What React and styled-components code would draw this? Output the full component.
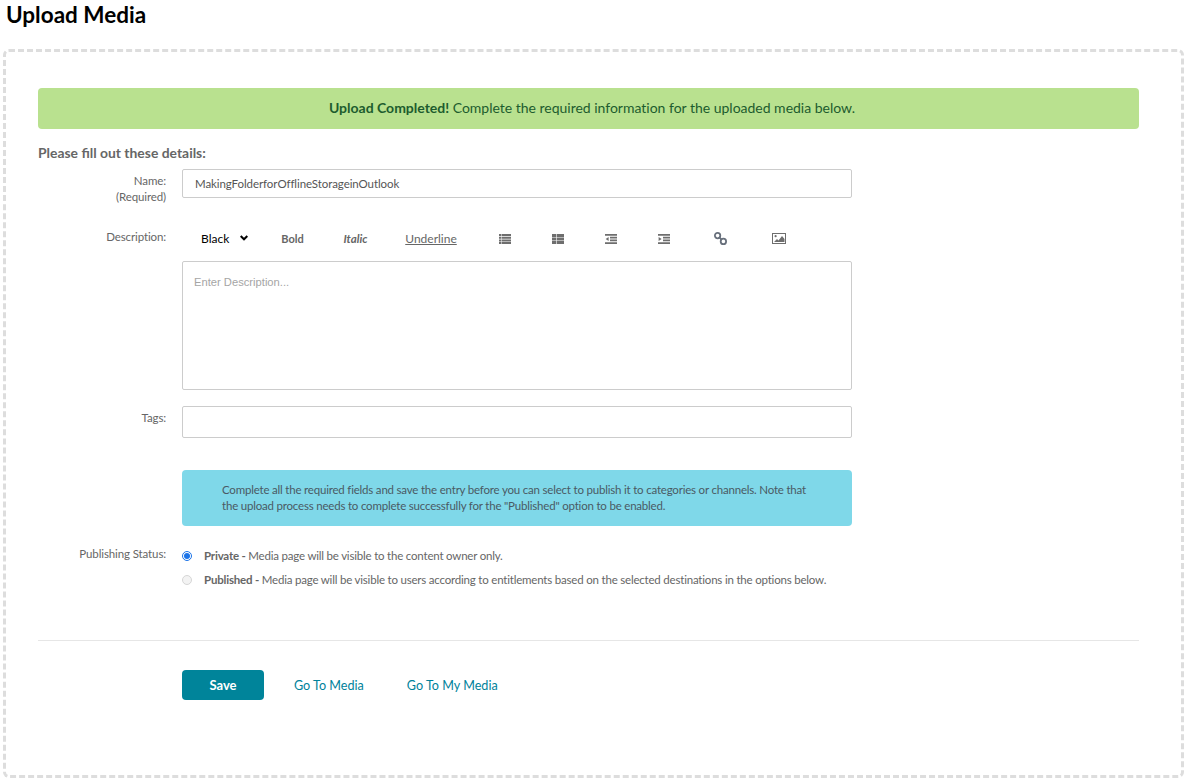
import React from "react";
import styled, { createGlobalStyle } from "styled-components";

const Global = createGlobalStyle`
  html, body { margin: 0; padding: 0; background: #fff; }
  body { font-family: Lato, "Open Sans", sans-serif; font-size: 12px; color: #666; }
  * { box-sizing: border-box; }
`;

const Page = styled.div`
  width: 1189px;
  height: 783px;
  overflow: hidden;
  padding: 0 5px 0 3px;
`;

const Title = styled.h1`
  margin: 0 0 20px 3px;
  height: 29px;
  font-size: 22.5px;
  line-height: 30px;
  font-weight: 700;
  color: #000;
`;

const Panel = styled.div`
  height: 729px;
  border: 3px dashed #ddd;
  border-radius: 6px;
  padding: 36px 42px 0 32px;
`;

const Alert = styled.div`
  height: 41px;
  border-radius: 4px;
  background: #b9e18f;
  color: #1d5c2e;
  font-size: 14px;
  line-height: 40px;
  text-align: center;
  padding-left: 7px;
  letter-spacing: -0.01px;
  b { font-weight: 700; }
`;

const Heading = styled.div`
  margin-top: 15px;
  height: 17px;
  font-size: 13.9px;
  line-height: 17px;
  font-weight: 700;
  color: #666;
`;

const Row = styled.div`
  display: grid;
  grid-template-columns: 128px 670px;
  column-gap: 16px;
  margin-top: ${(p) => p.$top || 0}px;
`;

const Label = styled.div`
  text-align: right;
  font-size: 11.5px;
  letter-spacing: -0.12px;
  line-height: 16px;
  padding-top: ${(p) => p.$pad || 0}px;
  color: #666;
`;

const TextBox = styled.div`
  height: ${(p) => p.$h}px;
  border: 1px solid #ccc;
  border-radius: 2px;
  padding: 0 12px;
  font-size: 11.5px;
  letter-spacing: -0.08px;
  line-height: ${(p) => p.$h - 2}px;
  color: #555;
`;

const Toolbar = styled.div`
  height: 23px;
  display: flex;
  align-items: center;
  font-size: 12px;
`;

const ColorSelect = styled.div`
  width: 84px;
  padding-left: 19px;
  display: flex;
  align-items: center;
  gap: 11px;
  color: #000;
  svg { display: block; margin-top: -2px; }
`;

const Tool = styled.span`
  width: ${(p) => p.$w}px;
  text-align: center;
  font-size: ${(p) => p.$size || 12}px;
  font-weight: ${(p) => (p.$b ? 700 : 400)};
  font-style: ${(p) => (p.$i ? "italic" : "normal")};
  text-decoration: ${(p) => (p.$u ? "underline" : "none")};
  color: #666;
`;

const IconSlot = styled.span`
  width: ${(p) => p.$w}px;
  display: flex;
  justify-content: center;
  color: #6e6e6e;
  svg { display: block; }
`;

const DescBox = styled.div`
  height: 129px;
  margin-top: 11px;
  border: 1px solid #ccc;
  border-radius: 2px;
  padding: 12px 11px;
  font-family: "Liberation Sans", Arial, sans-serif;
  font-size: 11.2px;
  line-height: 16px;
  color: #a5a5a5;
`;

const Note = styled.div`
  height: 56px;
  background: #7fd8e9;
  border-radius: 4px;
  padding: 12px 40px;
  font-size: 11.5px;
  letter-spacing: -0.2px;
  line-height: 16px;
  color: #4a5a64;
`;

const RadioList = styled.div`
  display: flex;
  flex-direction: column;
  gap: 8px;
  padding-top: 2px;
`;

const RadioRow = styled.div`
  display: flex;
  align-items: center;
  height: 16px;
  font-size: 11.5px;
  letter-spacing: -0.2px;
  line-height: 16px;
  color: #666;
  white-space: nowrap;
  b { font-weight: 700; }
`;

const Radio = styled.span`
  width: 10px;
  height: 10px;
  border-radius: 50%;
  margin-right: 12px;
  flex: none;
  background: ${(p) => (p.$on ? "#fff" : "#f3f3f3")};
  border: 1px solid ${(p) => (p.$on ? "#1a73e8" : "#d6d6d6")};
  padding: 1px;
  &::after {
    content: "";
    display: ${(p) => (p.$on ? "block" : "none")};
    width: 6px;
    height: 6px;
    border-radius: 50%;
    background: #1a73e8;
  }
`;

const Divider = styled.hr`
  margin: 52px 0 0;
  border: 0;
  border-top: 1px solid #e6e6e6;
`;

const Actions = styled.div`
  margin: 29px 0 0 144px;
  display: flex;
  align-items: center;
`;

const SaveButton = styled.button`
  width: 82px;
  height: 30px;
  border: 0;
  border-radius: 4px;
  background: #00849a;
  color: #fff;
  font-family: inherit;
  font-size: 13px;
  font-weight: 700;
`;

const ActionLink = styled.a`
  margin-left: ${(p) => p.$left}px;
  font-size: 12.6px;
  color: #00829b;
`;

const ListIcon = () => (
  <svg width="12" height="10" viewBox="0 0 12 10" fill="currentColor">
    <path d="M0 0h2.5v2H0zM3 0h9v2H3zM0 2.7h2.5v2H0zM3 2.7h9v2H3zM0 5.4h2.5v2H0zM3 5.4h9v2H3zM0 8h2.5v2H0zM3 8h9v2H3z" />
  </svg>
);
const ThListIcon = () => (
  <svg width="12" height="10" viewBox="0 0 12 10" fill="currentColor">
    <path d="M0 0h4v3H0zM4.6 0H12v3H4.6zM0 3.5h4v3H0zM4.6 3.5H12v3H4.6zM0 7h4v3H0zM4.6 7H12v3H4.6z" />
  </svg>
);
const IndentIcon = ({ out }) => (
  <svg width="12" height="10" viewBox="0 0 12 10" fill="currentColor">
    <path d="M0 0h12v1.8H0zM5 2.8h7v1.6H5zM5 5.6h7v1.6H5zM0 8.2h12V10H0z" />
    <path d={out ? "M3.6 3l-3 2 3 2z" : "M.6 3l3 2-3 2z"} />
  </svg>
);
const LinkIcon = () => (
  <svg width="13" height="13" viewBox="0 0 13 13" fill="none" stroke="#68707c" strokeWidth="1.8">
    <circle cx="3.6" cy="3.6" r="2.7" />
    <circle cx="9.4" cy="9.4" r="2.7" />
    <path d="M5.4 5.4l2.2 2.2" />
  </svg>
);
const PictureIcon = () => (
  <svg width="14" height="11" viewBox="0 0 14 11">
    <rect x="0.5" y="0.5" width="13" height="10" fill="#fff" stroke="currentColor" />
    <path d="M2 9l3-3 1.5 1.5L10 3l2.5 3v3z" fill="currentColor" />
    <circle cx="3.6" cy="3.2" r="1.1" fill="currentColor" />
  </svg>
);
const Chevron = () => (
  <svg width="8" height="6" viewBox="0 0 8 6" fill="none" stroke="#000" strokeWidth="2">
    <path d="M.7 1L4 4.3 7.3 1" />
  </svg>
);

export default function App() {
  return (
    <Page>
      <Global />
      <Title>Upload Media</Title>
      <Panel>
        <Alert>
          <b>Upload Completed!</b> Complete the required information for the uploaded media below.
        </Alert>
        <Heading>Please fill out these details:</Heading>
        <Row $top={8}>
          <Label $pad={4}>
            Name:
            <br />
            (Required)
          </Label>
          <TextBox $h={29}>MakingFolderforOfflineStorageinOutlook</TextBox>
        </Row>
        <Row $top={22}>
          <Label $pad={2}>Description:</Label>
          <div>
            <Toolbar>
              <ColorSelect>
                Black <Chevron />
              </ColorSelect>
              <Tool $w={53} $b $size={11}>Bold</Tool>
              <Tool $w={73} $i $b $size={11.5}>Italic</Tool>
              <Tool $w={78} $u>Underline</Tool>
              <IconSlot $w={70}><ListIcon /></IconSlot>
              <IconSlot $w={36}><ThListIcon /></IconSlot>
              <IconSlot $w={69}><IndentIcon out /></IconSlot>
              <IconSlot $w={37}><IndentIcon /></IconSlot>
              <IconSlot $w={76}><LinkIcon /></IconSlot>
              <IconSlot $w={42}><PictureIcon /></IconSlot>
            </Toolbar>
            <DescBox>Enter Description...</DescBox>
          </div>
        </Row>
        <Row $top={16}>
          <Label $pad={4}>Tags:</Label>
          <TextBox $h={32} />
        </Row>
        <Row $top={32}>
          <span />
          <Note>
            Complete all the required fields and save the entry before you can select to publish it to categories or channels. Note that
            <br />
            the upload process needs to complete successfully for the "Published" option to be enabled.
          </Note>
        </Row>
        <Row $top={20}>
          <Label>Publishing Status:</Label>
          <RadioList>
            <RadioRow>
              <Radio $on />
              <span><b>Private -</b> Media page will be visible to the content owner only.</span>
            </RadioRow>
            <RadioRow>
              <Radio />
              <span><b>Published -</b> Media page will be visible to users according to entitlements based on the selected destinations in the options below.</span>
            </RadioRow>
          </RadioList>
        </Row>
        <Divider />
        <Actions>
          <SaveButton>Save</SaveButton>
          <ActionLink $left={30}>Go To Media</ActionLink>
          <ActionLink $left={43}>Go To My Media</ActionLink>
        </Actions>
      </Panel>
    </Page>
  );
}
